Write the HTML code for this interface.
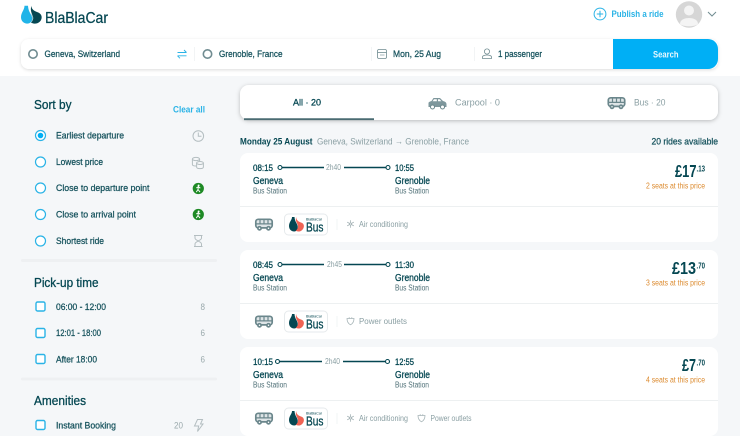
<!DOCTYPE html>
<html lang="en"><head><meta charset="utf-8"><title>BlaBlaCar</title>
<style>
html,body{margin:0;padding:0;width:740px;height:436px;overflow:hidden;background:#f5f7f9}
svg{display:block}
text{font-family:"Liberation Sans",sans-serif;fill:#054752}
.m{font-size:9.4px;stroke:#054752;stroke-width:.24px;fill:#1d5761}
.b{font-size:9.4px;font-weight:700}
.g{font-size:9px;fill:#8a9fa3}
.s{font-size:8px;fill:#4f7077}
.h{font-size:13px;stroke:#054752;stroke-width:.3px}
.c{font-size:9.4px;fill:#9aa9ac}
.bl{fill:#2ab3e6}
.t{font-size:9.6px;stroke:#054752;stroke-width:.3px}
.n{font-size:10px;stroke:#054752;stroke-width:.3px}
.i{fill:none;stroke:#b4bec1;stroke-width:1}
.o{font-size:8px;fill:#dc8a2e}
.p{font-size:17.5px;font-weight:700}
.q{font-size:8.5px;font-weight:700}
</style></head><body>
<svg width="740" height="436" viewBox="0 0 740 436" xmlns="http://www.w3.org/2000/svg">
<defs>
<filter id="sh" x="-5%" y="-30%" width="110%" height="170%"><feDropShadow dx="0" dy="1" stdDeviation="1.5" flood-color="#000" flood-opacity=".14"/></filter>
<filter id="sh2" x="-5%" y="-30%" width="110%" height="170%"><feDropShadow dx="0" dy="1" stdDeviation="2" flood-color="#000" flood-opacity=".25"/></filter>
<g id="bus" fill="none" stroke="#6b878c" stroke-width="1.7"><rect x="0.8" y="0.8" width="16.4" height="8.6" rx="2.5" fill="#dfe5e7"/><path d="M0.7 5.4H17.3M5 1V5.4M9 1V5.4M13 1V5.4" stroke-width="1.2"/><circle cx="4.5" cy="9.8" r="1.6" fill="#fff"/><circle cx="13.5" cy="9.8" r="1.6" fill="#fff"/></g>
<g id="radio"><circle r="5" fill="#fff" stroke="#2ab3e6" stroke-width="1.2"/></g>
<g id="chk"><rect x="-4.5" y="-4.5" width="9" height="9" rx="1.5" fill="#fff" stroke="#2ab3e6" stroke-width="1.4"/></g>
<g id="walk"><circle r="5.6" fill="#1e8a25"/><circle cx="0.3" cy="-3" r="1" fill="#fff"/><path d="M0-1.6-.3 1-2 3.6M-.3 1 1.7 3.6M-2-.5 0-1.8 2-.3" fill="none" stroke="#fff" stroke-width="1"/></g>
<g id="snow" fill="none" stroke="#a5b3b6" stroke-width=".8"><path d="M0-3.8V3.8M-3.3-1.9 3.3 1.9M-3.3 1.9 3.3-1.9"/><circle r="1" fill="#fff"/></g>
<path id="plug" d="M-3.5-2.5H3.5C3.5 1 1.5 3 0 3.8C-1.5 3-3.5 1-3.5-2.5ZM-1.3-2.5V-3.8M1.3-2.5V-3.8" fill="none" stroke="#a5b3b6" stroke-width=".8"/>
<g id="buslogo"><rect x="0.5" y="0.5" width="43" height="21" rx="4" fill="#fff" stroke="#e6eaec"/><path d="M8 3.5C8 6.5 5 8.5 5 12.5C5 15.8 7.4 18 10.2 18C12.6 18 13.8 16 13.8 13.4C13.8 10.5 10.8 8.5 10.5 3.5Z" fill="#054752"/><path d="M12.2 3.5C12.2 6.5 14.5 8.2 17 9C19.5 9.8 20.2 11.6 19.8 13.6C19.2 16.2 17 18 14.6 18C13 18 11.8 17.2 11.8 17.2C13.6 15.6 14.4 13.6 13.8 11.6C13.2 9.5 11 7.5 12.2 3.5Z" fill="#ef6354"/></g>
</defs>

<rect width="740" height="436" fill="#f5f7f9"/>
<rect width="740" height="76" fill="#fff"/>

<!-- Logo -->
<path d="M24.5 5.8C24.5 10 21 12.5 21 17.2C21 21 24 23.6 27.2 23.6C30.2 23.6 32.2 21.4 32.2 18.6C32.2 14.5 28.5 13 28 5.8Z" fill="#21b4e8"/>
<path d="M31.4 5.8C31.4 9 33.8 11 37 12C40.8 13.2 42 15.8 41.6 18.2C41 21.4 38.2 23.6 35 23.6C32.8 23.6 31 22.6 31 22.6C32.8 21 33.6 19 33 16.8C32.2 14 29.8 11 31.4 5.8Z" fill="#054752"/>
<path d="M31.2 13.5C32.8 15.5 33.4 18 32.6 20C32.2 21.2 31.6 22 31 22.6C31.8 21 32.2 19 32 17C31.8 15.5 31.4 14.5 31.2 13.5Z" fill="#7fb8c4"/>
<text x="45" y="23" font-size="16" textLength="63" lengthAdjust="spacingAndGlyphs" stroke="#054752" stroke-width=".25">BlaBlaCar</text>

<!-- Top right -->
<circle cx="600" cy="14" r="5.9" fill="none" stroke="#2ab3e6"/><path d="M600 10.8V17.2M596.8 14H603.2" stroke="#2ab3e6"/>
<text class="b bl" x="611.5" y="17.2" textLength="52" lengthAdjust="spacingAndGlyphs">Publish a ride</text>
<circle cx="689" cy="14.5" r="13.2" fill="#d6d6d6"/>
<circle cx="689" cy="10.5" r="5" fill="#f4f4f4"/><path d="M680 24C680 20 684 18 689 18C694 18 698 20 698 24C695 27 683 27 680 24Z" fill="#f4f4f4"/>
<path d="M708 12L712 16L716 12" fill="none" stroke="#708c91" stroke-width="1"/>

<!-- Search bar -->
<rect x="21" y="39" width="697" height="30" rx="8" fill="#fff" filter="url(#sh)"/>
<path d="M613 39H708A10 10 0 0 1 718 49V59A10 10 0 0 1 708 69H613Z" fill="#00aff5"/>
<circle cx="33" cy="54" r="4.2" fill="none" stroke="#708c91" stroke-width="1.6"/>
<text class="m" x="44.5" y="57.2" textLength="75.5" lengthAdjust="spacingAndGlyphs">Geneva, Switzerland</text>
<path d="M177.5 52.5H186.5M184 50L186.5 52.5M186.5 55.8H177.5M180 58.3L177.5 55.8" fill="none" stroke="#2ab3e6" stroke-width=".9"/>
<path d="M194.5 47V61M371.5 47V61M474.5 47V61" stroke="#f2f4f5"/>
<circle cx="207.5" cy="54" r="4.2" fill="none" stroke="#708c91" stroke-width="1.6"/>
<text class="m" x="219" y="57.2" textLength="63.5" lengthAdjust="spacingAndGlyphs">Grenoble, France</text>
<rect x="377.5" y="49.5" width="9" height="9" rx="1.5" fill="none" stroke="#708c91" stroke-width=".8"/><path d="M377.5 52.5H386.5" stroke="#708c91" stroke-width=".8"/><path d="M380 55H384.5" stroke="#a9b9bc"/>
<text class="m" x="393" y="57.2" textLength="48" lengthAdjust="spacingAndGlyphs">Mon, 25 Aug</text>
<circle cx="487" cy="51.5" r="2.6" fill="none" stroke="#708c91" stroke-width=".8"/><path d="M482.5 58.5V57C482.5 55.6 485 55 487 55C489 55 491.5 55.6 491.5 57V58.5Z" fill="none" stroke="#708c91" stroke-width=".8"/>
<text class="m" x="498" y="57.2" textLength="44" lengthAdjust="spacingAndGlyphs">1 passenger</text>
<text class="b" style="fill:#e8f8fe" x="653" y="57.3" textLength="25.5" lengthAdjust="spacingAndGlyphs">Search</text>

<!-- Sidebar: Sort by -->
<text class="h" x="34" y="109" textLength="37.5" lengthAdjust="spacingAndGlyphs">Sort by</text>
<text class="b bl" x="173" y="112.5" textLength="32" lengthAdjust="spacingAndGlyphs">Clear all</text>
<use href="#radio" x="40.5" y="135.5"/><circle cx="40.5" cy="135.5" r="2.8" fill="#00aff5"/>
<use href="#radio" x="40.5" y="162"/><use href="#radio" x="40.5" y="188"/><use href="#radio" x="40.5" y="214.5"/><use href="#radio" x="40.5" y="241"/>
<text class="m" x="56" y="138.7" textLength="68" lengthAdjust="spacingAndGlyphs">Earliest departure</text>
<text class="m" x="56" y="165.2" textLength="47" lengthAdjust="spacingAndGlyphs">Lowest price</text>
<text class="m" x="56" y="191.2" textLength="93.5" lengthAdjust="spacingAndGlyphs">Close to departure point</text>
<text class="m" x="56" y="217.7" textLength="80" lengthAdjust="spacingAndGlyphs">Close to arrival point</text>
<text class="m" x="56" y="244.2" textLength="48" lengthAdjust="spacingAndGlyphs">Shortest ride</text>
<circle class="i" cx="198.3" cy="136" r="5.3"/><path class="i" d="M198.3 132.5V136.2H201.5"/>
<g class="i"><ellipse cx="196" cy="159" rx="3.6" ry="1.6"/><path d="M192.4 159V164.5C192.4 165.5 194 166 196 166M199.6 159V161"/><ellipse cx="200" cy="163" rx="3.4" ry="1.5"/><path d="M196.6 163V167C196.6 168 198 168.6 200 168.6C202 168.6 203.4 168 203.4 167V163"/></g>
<use href="#walk" x="198.3" y="188.5"/><use href="#walk" x="198.3" y="214.5"/>
<path class="i" d="M194 235.5H202.5M194 246.5H202.5M195 235.5V238C195 240 198.2 240.5 198.2 241C198.2 241.5 195 242 195 244V246.5M201.5 235.5V238C201.5 240 198.2 240.5 198.2 241C198.2 241.5 201.5 242 201.5 244V246.5"/>

<rect x="21" y="259" width="196" height="3" rx="1.5" fill="#eef0f2"/>

<!-- Pick-up time -->
<text class="h" x="34" y="287" textLength="64.5" lengthAdjust="spacingAndGlyphs">Pick-up time</text>
<use href="#chk" x="40.5" y="306.5"/><use href="#chk" x="40.5" y="333"/><use href="#chk" x="40.5" y="359"/>
<text class="m" x="56" y="309.9" textLength="50" lengthAdjust="spacingAndGlyphs">06:00 - 12:00</text>
<text class="m" x="56" y="336.2" textLength="45" lengthAdjust="spacingAndGlyphs">12:01 - 18:00</text>
<text class="m" x="56" y="362.4" textLength="41" lengthAdjust="spacingAndGlyphs">After 18:00</text>
<text class="c" x="200.5" y="309.9" textLength="4.5" lengthAdjust="spacingAndGlyphs">8</text>
<text class="c" x="200.5" y="336.2" textLength="4.5" lengthAdjust="spacingAndGlyphs">6</text>
<text class="c" x="200.5" y="362.4" textLength="4.5" lengthAdjust="spacingAndGlyphs">6</text>

<rect x="21" y="377.5" width="196" height="3" rx="1.5" fill="#eef0f2"/>

<!-- Amenities -->
<text class="h" x="34" y="405" textLength="52" lengthAdjust="spacingAndGlyphs">Amenities</text>
<use href="#chk" x="40.5" y="425"/>
<text class="m" x="56" y="428.4" textLength="60" lengthAdjust="spacingAndGlyphs">Instant Booking</text>
<text class="c" x="174" y="428.4" textLength="9" lengthAdjust="spacingAndGlyphs">20</text>
<path class="i" d="M197.5 419.5H202.5L200.5 424H203L197.5 431.5L198.7 426H194.5Z"/>

<!-- Tabs -->
<rect x="240" y="85" width="478" height="35" rx="9" fill="#fff" filter="url(#sh2)"/>
<path d="M244 119.2H374" stroke="#4a6b72" stroke-width="1.8"/>
<text class="t" x="293" y="105.7" textLength="28" lengthAdjust="spacingAndGlyphs">All · 20</text>
<path d="M428.5 107V103.2C428.5 102 430 101.5 431.5 101L433.5 98H440L443 101C445 101.5 446.5 102.4 446.5 104.2V107Z" fill="#7e979c"/><path d="M434 99.2H436.8V101.2H432.6ZM438 99.2H439.6L441.4 101.2H438Z" fill="#fff"/><circle cx="432.5" cy="107" r="2" fill="#fff" stroke="#6b878c"/><circle cx="442.5" cy="107" r="2" fill="#fff" stroke="#6b878c"/>
<text class="g" x="455" y="105.7" textLength="45" lengthAdjust="spacingAndGlyphs">Carpool · 0</text>
<use href="#bus" x="607.5" y="97"/>
<text class="g" x="634" y="105.7" textLength="31.5" lengthAdjust="spacingAndGlyphs">Bus · 20</text>

<!-- Date line -->
<text class="b" x="240" y="144.7" textLength="72.5" lengthAdjust="spacingAndGlyphs">Monday 25 August</text>
<text class="g" x="317" y="144.7" font-size="9" style="font-size:9.4px" textLength="152" lengthAdjust="spacingAndGlyphs">Geneva, Switzerland → Grenoble, France</text>
<text class="m" x="651.5" y="144.7" textLength="66.5" lengthAdjust="spacingAndGlyphs">20 rides available</text>

<!-- Card 1 -->
<rect x="240" y="153" width="478" height="89" rx="8" fill="#fff"/>
<path d="M240 206.5H718" stroke="#edf0f1"/>
<text class="t" x="253" y="171.2" textLength="20" lengthAdjust="spacingAndGlyphs">08:15</text>
<path d="M282 167.5H324M344 167.5H386" stroke="#054752" stroke-width="1.6"/>
<circle cx="280" cy="167.5" r="2" fill="#fff" stroke="#054752" stroke-width="1.1"/><circle cx="388" cy="167.5" r="2" fill="#fff" stroke="#054752" stroke-width="1.1"/>
<text class="g" x="326" y="170" style="font-size:8px" textLength="15" lengthAdjust="spacingAndGlyphs">2h40</text>
<text class="t" x="395" y="171.2" textLength="19" lengthAdjust="spacingAndGlyphs">10:55</text>
<text class="n" x="253" y="184.2" textLength="30" lengthAdjust="spacingAndGlyphs">Geneva</text>
<text class="s" x="253" y="193.4" textLength="34" lengthAdjust="spacingAndGlyphs">Bus Station</text>
<text class="n" x="395" y="184.2" textLength="35" lengthAdjust="spacingAndGlyphs">Grenoble</text>
<text class="s" x="395" y="193.4" textLength="34" lengthAdjust="spacingAndGlyphs">Bus Station</text>
<text class="p" x="675" y="177" textLength="21.5" lengthAdjust="spacingAndGlyphs">£17</text>
<text class="q" x="696.5" y="171.5" textLength="8.5" lengthAdjust="spacingAndGlyphs">.13</text>
<text class="o" x="646" y="188.7" textLength="59" lengthAdjust="spacingAndGlyphs">2 seats at this price</text>
<use href="#bus" x="255" y="218.5"/>
<use href="#buslogo" x="284" y="213.5"/>
<text x="306" y="220.5" font-size="3.6" textLength="16" lengthAdjust="spacingAndGlyphs">BlaBlaCar</text>
<text x="306" y="231.3" font-size="12.5" textLength="17.5" lengthAdjust="spacingAndGlyphs" stroke="#054752" stroke-width=".25">Bus</text>
<path d="M337 219V230" stroke="#f2f4f5"/>
<use href="#snow" x="350.5" y="224"/>
<text class="g" x="359" y="227" style="font-size:8.4px" textLength="49" lengthAdjust="spacingAndGlyphs">Air conditioning</text>

<!-- Card 2 -->
<rect x="240" y="250" width="478" height="89" rx="8" fill="#fff"/>
<path d="M240 303.5H718" stroke="#edf0f1"/>
<text class="t" x="253" y="268.2" textLength="20" lengthAdjust="spacingAndGlyphs">08:45</text>
<path d="M282 264.5H324M344 264.5H386" stroke="#054752" stroke-width="1.6"/>
<circle cx="280" cy="264.5" r="2" fill="#fff" stroke="#054752" stroke-width="1.1"/><circle cx="388" cy="264.5" r="2" fill="#fff" stroke="#054752" stroke-width="1.1"/>
<text class="g" x="327" y="267" style="font-size:8px" textLength="15" lengthAdjust="spacingAndGlyphs">2h45</text>
<text class="t" x="395" y="268.2" textLength="19" lengthAdjust="spacingAndGlyphs">11:30</text>
<text class="n" x="253" y="281.2" textLength="30" lengthAdjust="spacingAndGlyphs">Geneva</text>
<text class="s" x="253" y="290.4" textLength="34" lengthAdjust="spacingAndGlyphs">Bus Station</text>
<text class="n" x="395" y="281.2" textLength="35" lengthAdjust="spacingAndGlyphs">Grenoble</text>
<text class="s" x="395" y="290.4" textLength="34" lengthAdjust="spacingAndGlyphs">Bus Station</text>
<text class="p" x="672" y="274" textLength="24" lengthAdjust="spacingAndGlyphs">£13</text>
<text class="q" x="696.5" y="268.5" textLength="8.5" lengthAdjust="spacingAndGlyphs">.70</text>
<text class="o" x="646" y="285.7" textLength="59" lengthAdjust="spacingAndGlyphs">3 seats at this price</text>
<use href="#bus" x="255" y="315.5"/>
<use href="#buslogo" x="284" y="310.5"/>
<text x="306" y="317.5" font-size="3.6" textLength="16" lengthAdjust="spacingAndGlyphs">BlaBlaCar</text>
<text x="306" y="328.3" font-size="12.5" textLength="17.5" lengthAdjust="spacingAndGlyphs" stroke="#054752" stroke-width=".25">Bus</text>
<path d="M337 316V327" stroke="#f2f4f5"/>
<use href="#plug" x="350.5" y="321"/>
<text class="g" x="359" y="324" style="font-size:8.4px" textLength="48" lengthAdjust="spacingAndGlyphs">Power outlets</text>

<!-- Card 3 -->
<rect x="240" y="347" width="478" height="89" rx="8" fill="#fff"/>
<path d="M240 400.5H718" stroke="#edf0f1"/>
<text class="t" x="253" y="365.2" textLength="20" lengthAdjust="spacingAndGlyphs">10:15</text>
<path d="M279 361.5H322M343 361.5H386" stroke="#054752" stroke-width="1.6"/>
<circle cx="277.5" cy="361.5" r="2" fill="#fff" stroke="#054752" stroke-width="1.1"/><circle cx="387.5" cy="361.5" r="2" fill="#fff" stroke="#054752" stroke-width="1.1"/>
<text class="g" x="325" y="364" style="font-size:8px" textLength="15" lengthAdjust="spacingAndGlyphs">2h40</text>
<text class="t" x="395" y="365.2" textLength="19" lengthAdjust="spacingAndGlyphs">12:55</text>
<text class="n" x="253" y="378.2" textLength="30" lengthAdjust="spacingAndGlyphs">Geneva</text>
<text class="s" x="253" y="387.4" textLength="34" lengthAdjust="spacingAndGlyphs">Bus Station</text>
<text class="n" x="395" y="378.2" textLength="35" lengthAdjust="spacingAndGlyphs">Grenoble</text>
<text class="s" x="395" y="387.4" textLength="34" lengthAdjust="spacingAndGlyphs">Bus Station</text>
<text class="p" x="682" y="371" textLength="14" lengthAdjust="spacingAndGlyphs">£7</text>
<text class="q" x="696.5" y="365.5" textLength="8.5" lengthAdjust="spacingAndGlyphs">.70</text>
<text class="o" x="646" y="382.7" textLength="59" lengthAdjust="spacingAndGlyphs">4 seats at this price</text>
<use href="#bus" x="255" y="412.5"/>
<use href="#buslogo" x="284" y="407.5"/>
<text x="306" y="414.5" font-size="3.6" textLength="16" lengthAdjust="spacingAndGlyphs">BlaBlaCar</text>
<text x="306" y="425.3" font-size="12.5" textLength="17.5" lengthAdjust="spacingAndGlyphs" stroke="#054752" stroke-width=".25">Bus</text>
<path d="M337 413V424" stroke="#f2f4f5"/>
<use href="#snow" x="350.5" y="418"/>
<text class="g" x="359" y="421" style="font-size:8.4px" textLength="49" lengthAdjust="spacingAndGlyphs">Air conditioning</text>
<use href="#plug" x="421.5" y="418"/>
<text class="g" x="430.5" y="421" style="font-size:8.4px" textLength="41" lengthAdjust="spacingAndGlyphs">Power outlets</text>
</svg>
</body></html>
